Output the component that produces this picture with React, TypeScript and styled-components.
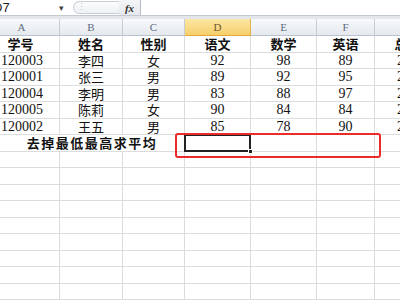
import styled, { createGlobalStyle } from 'styled-components';

const GlobalStyle = createGlobalStyle`
    html, body {
        margin: 0;
        padding: 0;
        background: #ffffff;
        overflow: hidden;
    }
    #root {
        width: 400px;
        height: 300px;
        overflow: hidden;
    }
`

const columns = ['A', 'B', 'C', 'D', 'E', 'F', 'G'];

const titles = ['学号', '姓名', '性别', '语文', '数学', '英语', '总分'];

const rows = [
    ['120003', '李四', '女', '92', '98', '89', '279'],
    ['120001', '张三', '男', '89', '92', '95', '276'],
    ['120004', '李明', '男', '83', '88', '97', '268'],
    ['120005', '陈莉', '女', '90', '84', '84', '258'],
    ['120002', '王五', '男', '85', '78', '90', '253'],
];

const EMPTY_ROWS = 9;

function App() {
    return (
        <Page>
            <GlobalStyle />
            <FormulaBar>
                <NameBox>
                    <span>D7</span>
                    <DropArrow>▾</DropArrow>
                </NameBox>
                <ButtonPill>
                    <Dots>⋮</Dots>
                </ButtonPill>
                <FxBox>fx</FxBox>
                <FormulaInput />
            </FormulaBar>
            <Band />
            <Sheet>
                {columns.map((c, i) => (
                    <ColHeader key={c} $active={c === 'D'} $first={i === 0}>{c}</ColHeader>
                ))}

                {titles.map((t, i) => (
                    <Cell key={t} $bold $first={i === 0}>{t}</Cell>
                ))}

                {rows.map((r) => r.map((v, i) => (
                    <Cell key={r[0] + i} $left={i === 0} $num={i === 0 || i > 2}>{v}</Cell>
                )))}

                <MergedCell>去掉最低最高求平均</MergedCell>
                <Cell $selected>
                    <FillHandle />
                </Cell>
                <Cell />
                <Cell />
                <Cell />

                {Array.from({ length: EMPTY_ROWS * columns.length }).map((_, i) => (
                    <Cell key={'e' + i} />
                ))}

                <Annotation />
            </Sheet>
        </Page>
    );
}

const Page = styled.div`
    width: 400px;
    height: 300px;
    display: flex;
    flex-direction: column;
    background: #ffffff;
    overflow: hidden;
`

const FormulaBar = styled.div`
    height: 16px;
    flex-shrink: 0;
    display: flex;
    align-items: stretch;
    background: #ffffff;
    border-bottom: 1px solid #c3c9d1;
    box-sizing: border-box;
`

const NameBox = styled.div`
    width: 76px;
    margin-left: -9px;
    padding: 0 3px 0 2px;
    box-sizing: border-box;
    display: flex;
    align-items: center;
    justify-content: space-between;
    font-family: "Liberation Sans", Arial, sans-serif;
    font-size: 13px;
    line-height: 14px;
    color: #1f1f1f;
`

const DropArrow = styled.span`
    font-size: 9px;
    color: #444;
`

const ButtonPill = styled.div`
    width: 46px;
    margin-left: 6px;
    margin-top: 1px;
    height: 13px;
    box-sizing: border-box;
    border: 1px solid #c8ced6;
    border-right: none;
    border-radius: 7px 0 0 7px;
    background: linear-gradient(#fbfcfd, #eef1f4);
    display: flex;
    align-items: center;
    padding-left: 3px;
`

const Dots = styled.span`
    font-size: 9px;
    line-height: 9px;
    color: #b9c0c8;
`

const FxBox = styled.div`
    width: 22px;
    box-sizing: border-box;
    display: flex;
    align-items: center;
    justify-content: center;
    background: linear-gradient(#f3f5f7, #e6e9ed);
    border-right: 1px solid #b5bcc6;
    font-family: "Liberation Serif", serif;
    font-style: italic;
    font-weight: bold;
    font-size: 11px;
    line-height: 12px;
    color: #333;
`

const FormulaInput = styled.div`
    flex: 1;
    background: #ffffff;
`

const Band = styled.div`
    height: 3px;
    flex-shrink: 0;
    background: #e3e7ec;
`

const Sheet = styled.div`
    position: relative;
    display: grid;
    grid-template-columns: 60px 63px 62px 66px 66px 58px 66px;
    grid-template-rows: 17px repeat(16, 16.5px);
`

const ColHeader = styled.div<{ $active?: boolean; $first?: boolean }>`
    box-sizing: border-box;
    display: flex;
    align-items: center;
    justify-content: center;
    padding-right: ${(p) => (p.$first ? '16px' : '0')};
    border-right: 1px solid ${(p) => (p.$active ? '#e2b04d' : '#c5ccd5')};
    border-bottom: 1px solid ${(p) => (p.$active ? '#e3a93a' : '#b7c3d1')};
    background: ${(p) => (p.$active
        ? 'linear-gradient(#fce7a6, #f6cf6a)'
        : 'linear-gradient(#f7f9fb, #e5e9ee)')};
    font-family: "Liberation Serif", serif;
    font-size: 11px;
    line-height: 12px;
    color: ${(p) => (p.$active ? '#6d5a2b' : '#5c6b80')};
`

const Cell = styled.div<{ $bold?: boolean; $left?: boolean; $first?: boolean; $num?: boolean; $selected?: boolean }>`
    position: relative;
    box-sizing: border-box;
    display: flex;
    align-items: center;
    justify-content: ${(p) => (p.$left ? 'flex-start' : 'center')};
    padding-left: ${(p) => (p.$left ? '1px' : '0')};
    padding-right: ${(p) => (p.$first ? '18px' : '0')};
    border-right: 1px solid #dadcde;
    border-bottom: 1px solid #dadcde;
    white-space: nowrap;
    overflow: visible;
    font-family: ${(p) => (p.$num
        ? '"Liberation Serif", serif'
        : '"Noto Sans CJK SC", sans-serif')};
    font-size: ${(p) => (p.$num ? '14px' : '13px')};
    line-height: 15px;
    font-weight: ${(p) => (p.$bold ? 'bold' : 'normal')};
    color: #111;
    ${(p) => p.$selected && `
        &::before {
            content: '';
            position: absolute;
            left: -1px;
            top: -1px;
            right: -1px;
            bottom: -1px;
            border: 2px solid #222;
        }
    `}
`

const FillHandle = styled.span`
    position: absolute;
    right: -3px;
    bottom: -3px;
    width: 5px;
    height: 5px;
    background: #222;
    border: 1px solid #fff;
    box-sizing: border-box;
    z-index: 1;
`

const MergedCell = styled.div`
    grid-column: span 3;
    box-sizing: border-box;
    display: flex;
    align-items: center;
    justify-content: center;
    border-right: 1px solid #dadcde;
    border-bottom: 1px solid #dadcde;
    font-family: "Noto Sans CJK SC", sans-serif;
    font-size: 13px;
    line-height: 15px;
    font-weight: bold;
    letter-spacing: 1.5px;
    color: #111;
`

const Annotation = styled.div`
    position: absolute;
    left: 175px;
    top: 114px;
    width: 206px;
    height: 25px;
    box-sizing: border-box;
    border: 2px solid #ec2a2a;
    border-radius: 3px;
    pointer-events: none;
`

export default App;
